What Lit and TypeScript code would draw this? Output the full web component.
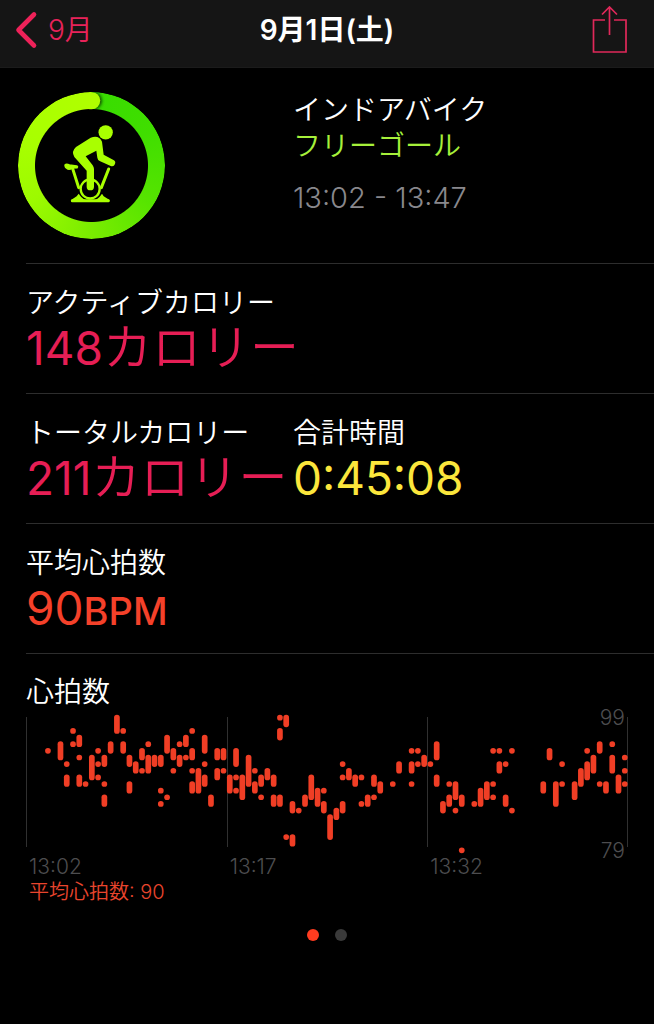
import { LitElement, html, svg, css } from "lit";
import { customElement, property, state } from "lit/decorators.js";

type Sample = [slot: number, high: number, low: number];

const MAX_BPM = 99;
const SLOT_WIDTH = 6.27;
const BPM_HEIGHT = 6.63;

// Offsets below the top of the scale, by time slot: "a" is one beat, "a-b" a range.
const READINGS: Record<number, string> = {
  3: "5", 5: "4-6", 6: "7 9-10", 7: "2 4", 8: "3-4 6 9-10", 9: "10", 10: "6-9",
  11: "5 7 9", 12: "6-7 10 12-13", 13: "4-5", 14: "0-2", 15: "2 4-5", 16: "6-7 10-11",
  17: "7-8", 18: "5-6 8", 19: "4 6-8", 20: "6-7", 21: "6-7 11 13", 22: "3-5 12",
  23: "5-6 8", 24: "4 6-7", 25: "3-4 6", 26: "2 5-6 8 10-11", 27: "8-11", 28: "3-5 7 9-10",
  29: "12-13", 30: "5-6 8-9", 31: "5-6 8", 32: "9-11", 33: "5-7 9 11", 34: "9-12",
  35: "6-10", 36: "8 10-11", 37: "9-10 12", 38: "8-9", 39: "9-10 12-13", 40: "0 2-3 12-13",
  41: "0-1 18", 42: "13-14 18-19", 43: "14", 44: "12-13", 45: "9-12", 46: "11-13",
  47: "11 13-14", 48: "15-18", 49: "14-15", 50: "7 9 13-14", 51: "8-9", 52: "9-10",
  53: "9 13", 54: "12-13", 55: "9-10 12", 56: "10-11", 58: "10", 59: "7-8", 61: "5 7-8 10",
  62: "5 7", 63: "6-7", 64: "7", 65: "4-6 9-10", 66: "13-14", 67: "10 12-13", 68: "10-12 14",
  69: "12-13 20", 71: "13", 72: "11-13", 73: "10-12", 74: "5 10 12", 75: "5 7-8",
  76: "7 12-13", 77: "5 14", 82: "10-11", 83: "5-6", 84: "10-13", 85: "7 10", 87: "10-12",
  88: "8-10", 89: "5 7-9", 90: "6-8", 91: "4-5 10", 92: "10-11", 93: "4 6-8", 94: "9-11",
  95: "6 8 10",
};

const SAMPLES: Sample[] = Object.entries(READINGS).flatMap(([slot, text]) =>
  text.split(" ").map((range): Sample => {
    const [top, bottom = top] = range.split("-").map(Number);
    return [Number(slot), MAX_BPM - top, MAX_BPM - bottom];
  })
);

@customElement("goal-ring")
export class GoalRing extends LitElement {
  static styles = css`
    :host {
      display: grid;
      width: 147px;
      height: 147px;
    }
    .track,
    .art {
      grid-area: 1 / 1;
      width: 100%;
      height: 100%;
    }
    .art {
      z-index: 1;
    }
    .track {
      border-radius: 50%;
      background: conic-gradient(
        #38dc00 0deg,
        #40de00 60deg,
        #55e400 120deg,
        #7aec00 180deg,
        #9dfa00 240deg,
        #a8ff00 290deg,
        #b0ff00 360deg
      );
      -webkit-mask: radial-gradient(closest-side, transparent 56px, #000 57px);
      mask: radial-gradient(closest-side, transparent 56px, #000 57px);
    }
  `;

  render() {
    return html`
      <svg class="art" viewBox="0 0 441 441" role="img" aria-label="インドアバイク">
        <defs>
          <clipPath id="band">
            <path d="M220 0 H300 V60 L220 51 Z" />
          </clipPath>
          <filter id="soft" x="-50%" y="-50%" width="200%" height="200%">
            <feGaussianBlur stdDeviation="5" />
          </filter>
          <clipPath id="disc"><circle cx="220.5" cy="220.5" r="220" /></clipPath>
        </defs>
        <g clip-path="url(#disc)">
          <g clip-path="url(#band)">
            <circle cx="226" cy="26" r="26" fill="#082c00" opacity="0.8" filter="url(#soft)" />
          </g>
          <path d="M214 0 H221 A25.5 25.5 0 0 1 221 51.5 H214 Z" fill="#b0ff00" />
        </g>
        <g transform="translate(96 69)" fill="#a9ff00" stroke="#a9ff00" stroke-linejoin="round" stroke-linecap="round">
          <circle cx="167" cy="52" r="21.5" stroke="none" />
          <path
            stroke="none"
            d="M78 96 L122 68 Q147 59 156 80 L161 119 L189 134 A9.500 9.500 0 0 1 182 153 L149 138 Q143 135 142 128 L139 107 L107 124 L128 151 Q132 157 132 162 L132 215 A11 11 0 0 1 110 215 L110 167 L73 126 Q63 109 78 96 Z"
          />
          <path stroke-width="5" d="M46 149 Q44 152 47 157 L54 162 Q61 163 66 159 L81 158 Q84 154 80 153 L58 150 Q50 146 46 149 Z" />
          <path fill="none" stroke-width="9" d="M68 161 L86 218 M176 162 L154 218" />
          <circle cx="120.500" cy="222" r="28.500" fill="none" stroke-width="7" />
          <path stroke="none" d="M86 236 Q100 258 121 258 Q142 258 156 236 L161 244 L180 256 L62 256 L80 244 Z" />
          <path fill="none" stroke-width="9" d="M67 257 H175" />
        </g>
      </svg>
      <div class="track"></div>
    `;
  }
}

@customElement("stat-item")
export class StatItem extends LitElement {
  @property() label = "";
  @property() value = "";
  @property() unit = "";

  static styles = css`
    :host {
      display: block;
      min-width: 0;
      white-space: nowrap;
    }
    .label {
      font-size: 28px;
      line-height: 36px;
      color: #fff;
    }
    .value {
      font-size: 46px;
      line-height: 54px;
      padding-bottom: 2px;
      font-weight: 400;
    }
    .unit {
      font-size: 49px;
      line-height: 1;
      font-weight: 350;
    }
    .unit.latin {
      font-size: 38px;
      font-weight: 500;
    }
  `;

  render() {
    const latin = /^[A-Z]+$/.test(this.unit);
    return html`
      <div class="label">${this.label}</div>
      <div class="value">${this.value}${this.unit
        ? html`<span class=${latin ? "unit latin" : "unit"}>${this.unit}</span>`
        : ""}</div>
    `;
  }
}

@customElement("heart-chart")
export class HeartChart extends LitElement {
  static styles = css`
    :host {
      display: block;
    }
    .plot {
      display: block;
      width: 100%;
      height: auto;
      overflow: visible;
    }
    .rule {
      stroke: #303030;
      stroke-width: 1;
    }
    .sample {
      stroke: #f03e25;
      stroke-width: 5.700;
      stroke-linecap: round;
    }
    .scale {
      fill: #4d4d4f;
      font-size: 21px;
      text-anchor: end;
    }
    .times {
      display: grid;
      grid-template-columns: repeat(3, 1fr);
      font-size: 21px;
      line-height: 26px;
      color: #4d4d4f;
    }
    .time {
      padding-left: 3px;
    }
    .average {
      padding-left: 3px;
      font-size: 20px;
      line-height: 24px;
      color: #e9452d;
    }
  `;

  private y(bpm: number) {
    return 7.7 + (MAX_BPM - bpm) * BPM_HEIGHT;
  }

  render() {
    return html`
      <svg class="plot" viewBox="0 0 602 144" role="img" aria-label="心拍数">
        ${[0.5, 201.5, 401.5, 601.5].map((x) => svg`<line class="rule" x1=${x} x2=${x} y1="7" y2="137" />`)}
        ${SAMPLES.map(([slot, high, low]) => {
          const x = (slot + 0.5) * SLOT_WIDTH;
          return svg`<line class="sample" x1=${x} x2=${x} y1=${this.y(high)} y2=${this.y(low) + 0.01} />`;
        })}
        <text class="scale" x="599" y="15">99</text>
        <text class="scale" x="599" y="148">79</text>
      </svg>
      <div class="times">
        ${["13:02", "13:17", "13:32"].map((t) => html`<span class="time">${t}</span>`)}
      </div>
      <div class="average">平均心拍数: 90</div>
    `;
  }
}

@customElement("app-root")
export class AppRoot extends LitElement {
  @state() private page = 0;

  static styles = css`
    :host {
      display: block;
      box-sizing: border-box;
      min-height: 100vh;
      background: #000;
      color: #fff;
      font-family: Inter, "Noto Sans CJK JP", sans-serif;
      font-weight: 350;
    }
    .bar {
      display: grid;
      grid-template-columns: 1fr auto 1fr;
      align-items: center;
      box-sizing: border-box;
      height: 68px;
      padding: 0 15px 8px;
      background: #151515;
      border-bottom: 1px solid #1b1b1b;
    }
    .back,
    .share,
    .dot {
      padding: 0;
      border: 0;
      background: none;
      cursor: pointer;
    }
    .back {
      display: flex;
      align-items: center;
      gap: 10px;
      justify-self: start;
      font: inherit;
      font-size: 28px;
      line-height: 36px;
      color: #e8235a;
    }
    .share {
      display: flex;
      justify-self: end;
      margin-right: 11px;
    }
    .title {
      margin: 0;
      font-size: 28px;
      line-height: 36px;
      font-weight: 600;
    }
    .split {
      display: grid;
      grid-template-columns: minmax(0, 17fr) minmax(0, 23fr);
    }
    .hero {
      padding: 24px 0 24px 26px;
    }
    .ring {
      margin-left: -8px;
    }
    .summary {
      white-space: nowrap;
    }
    .kind,
    .goal,
    .span,
    .heading {
      margin: 0;
      font-size: 28px;
      line-height: 36px;
      font-weight: 350;
    }
    .goal {
      color: #a6f03a;
    }
    .span {
      margin-top: 16px;
      font-size: 29px;
      color: #89888d;
    }
    .row {
      margin-left: 26px;
      padding: 21px 0 16px;
      border-top: 1px solid #2d2d2d;
    }
    .energy {
      color: #e61e55;
    }
    .duration {
      color: #fbe63c;
    }
    .pulse {
      color: #f4412a;
    }
    .chart {
      padding: 20px 26px 0 0;
    }
    .pager {
      display: flex;
      justify-content: center;
      gap: 16px;
      padding: 25px 0;
    }
    .dot {
      width: 12px;
      height: 12px;
      border-radius: 50%;
      background: #3a3a3a;
    }
    .dot.current {
      background: #ff3c20;
    }
  `;

  render() {
    return html`
      <header class="bar">
        <button class="back">
          <svg width="23" height="38" viewBox="0 0 23 38" aria-hidden="true">
            <path d="M19 3.500 L3.500 19 L19 34.500" fill="none" stroke="#ee2259" stroke-width="4.600" stroke-linecap="round" stroke-linejoin="round" />
          </svg>
          9月
        </button>
        <h1 class="title">9月1日(土)</h1>
        <button class="share" aria-label="共有">
          <svg width="36" height="48" viewBox="0 0 36 48" aria-hidden="true">
            <path d="M13 14 H1.500 V46 H34 V14 H22 M17.500 29 V1 M10 8.500 L17.500 1 L25 8.500" fill="none" stroke="#e0285a" stroke-width="1.700" />
          </svg>
        </button>
      </header>
      <main>
        <section class="hero split">
          <goal-ring class="ring"></goal-ring>
          <div class="summary">
            <h2 class="kind">インドアバイク</h2>
            <p class="goal">フリーゴール</p>
            <p class="span">13:02 - 13:47</p>
          </div>
        </section>
        <section class="row">
          <stat-item class="energy" label="アクティブカロリー" value="148" unit="カロリー"></stat-item>
        </section>
        <section class="row split">
          <stat-item class="energy" label="トータルカロリー" value="211" unit="カロリー"></stat-item>
          <stat-item class="duration" label="合計時間" value="0:45:08"></stat-item>
        </section>
        <section class="row">
          <stat-item class="pulse" label="平均心拍数" value="90" unit="BPM"></stat-item>
        </section>
        <section class="row chart">
          <h2 class="heading">心拍数</h2>
          <heart-chart></heart-chart>
        </section>
      </main>
      <nav class="pager" aria-label="ページ">
        ${[0, 1].map(
          (n) => html`<button
            class=${n === this.page ? "dot current" : "dot"}
            aria-label=${`ページ ${n + 1}`}
            @click=${() => (this.page = n)}
          ></button>`
        )}
      </nav>
    `;
  }
}
